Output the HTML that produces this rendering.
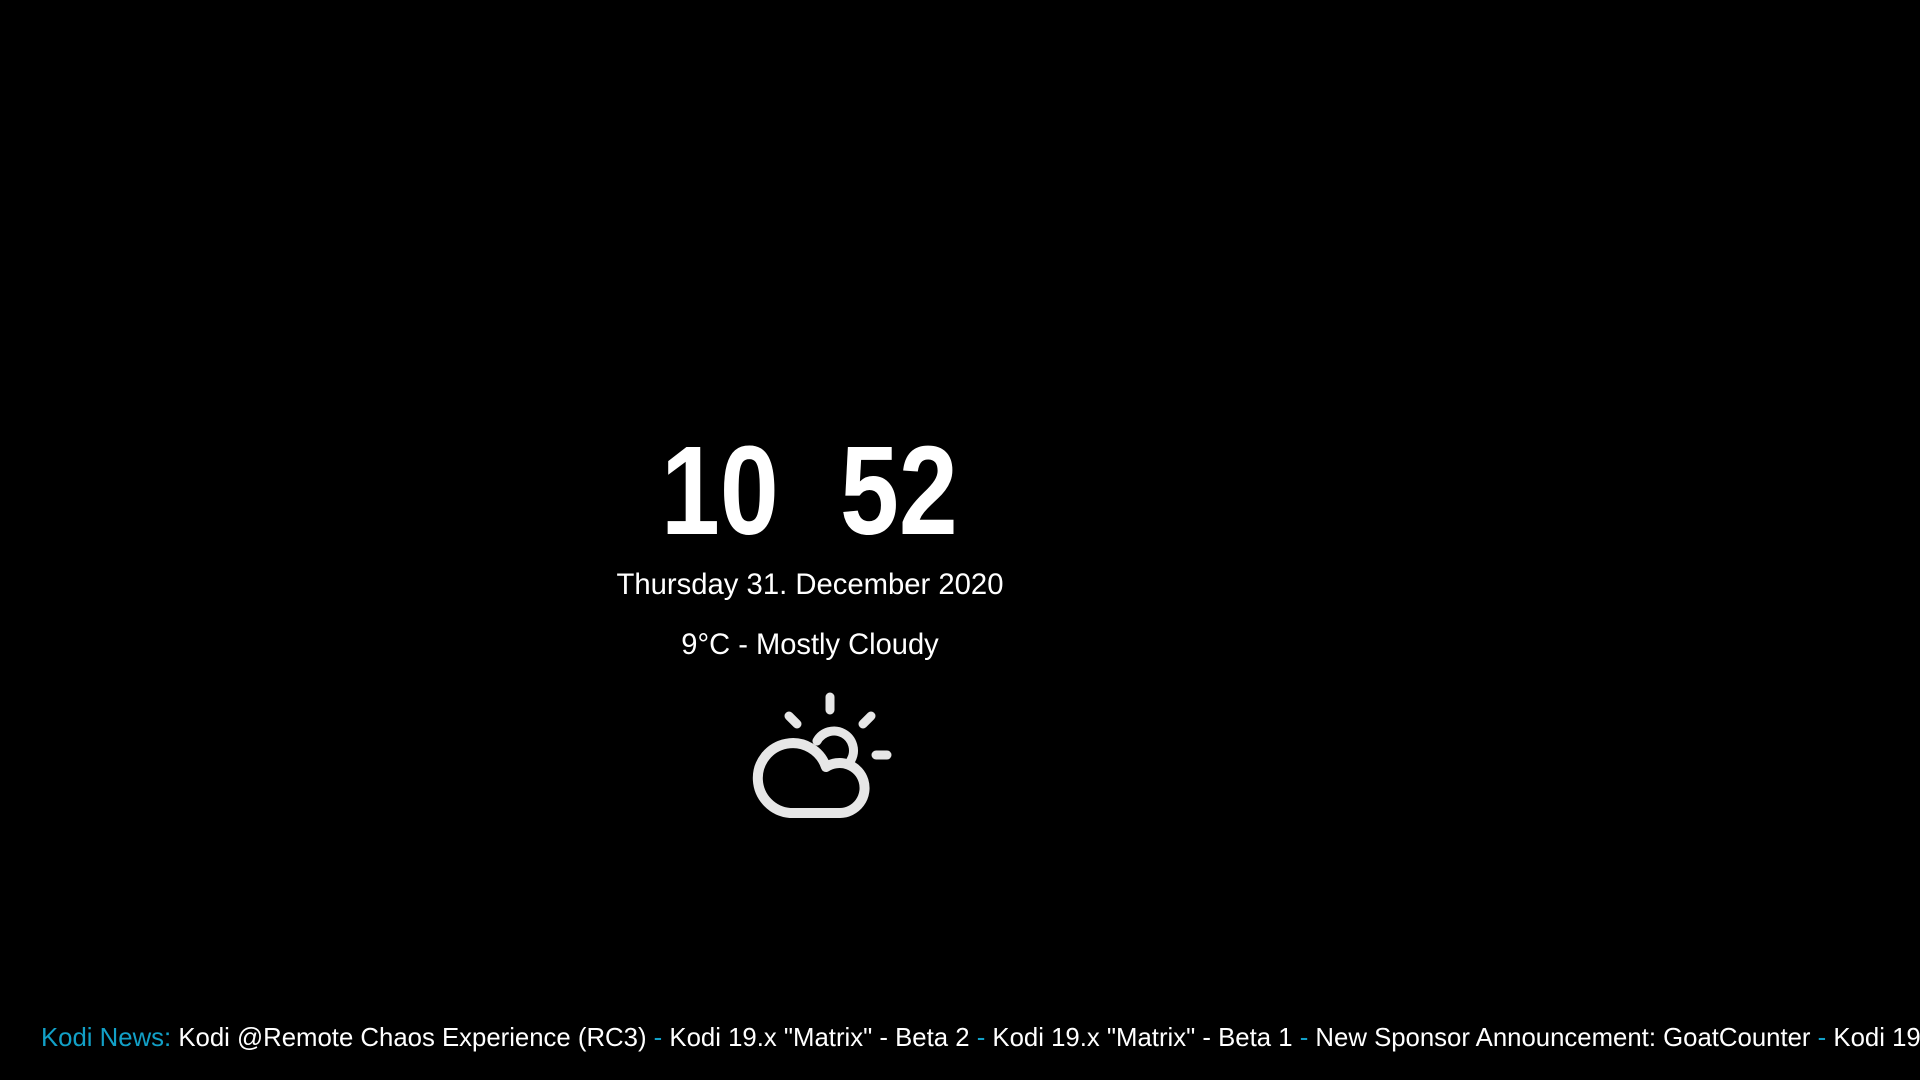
<!DOCTYPE html>
<html><head><meta charset="utf-8"><style>
html,body{margin:0;padding:0;background:#000;width:1920px;height:1080px;overflow:hidden;font-family:"Liberation Sans",sans-serif;color:#fff}
.clock{position:absolute;top:426px;height:130px;font-weight:bold;font-size:126px;line-height:130px;white-space:nowrap;transform:scaleX(0.84);transform-origin:left top}
.c{position:absolute;left:0;width:1620px;text-align:center;white-space:nowrap}
.date{top:565px;font-size:30px;line-height:40px;transform:scaleX(0.975);}
.wx{top:625px;font-size:30px;line-height:40px;transform:scaleX(0.97);}
.tw{position:absolute;left:0;top:1020px;width:1920px;height:40px;overflow:hidden}
.tick{position:absolute;left:41px;top:0;font-size:26px;line-height:34px;white-space:nowrap;transform:scaleX(0.99);transform-origin:left top}
.b{color:#12a0c7}
</style></head><body>
<div class="clock" style="left:661px">10</div>
<div class="clock" style="left:840px">52</div>
<div class="c date">Thursday 31. December 2020</div>
<div class="c wx">9°C - Mostly Cloudy</div>
<svg width="1920" height="1080" style="position:absolute;left:0;top:0" fill="none" stroke="#e6e6e6" stroke-linecap="round">
<g stroke-width="9">
<path d="M830 697 V710 M789 716 L797 724 M871 716 L863 724 M876 755 H887"/>
<path d="M817 741 A18 18 0 0 1 851 760"/>
</g>
<path stroke-width="10" stroke-linejoin="round" d="M840 813 H790 A35 35 0 1 1 826 767 A25 25 0 1 1 840 813 Z"/>
</svg>
<div class="tw"><div class="tick"><span class="b">Kodi News:</span> Kodi @Remote Chaos Experience (RC3) <span class="b">-</span> Kodi 19.x "Matrix" - Beta 2 <span class="b">-</span> Kodi 19.x "Matrix" - Beta 1 <span class="b">-</span> New Sponsor Announcement: GoatCounter <span class="b">-</span> Kodi 19</div></div>
</body></html>
